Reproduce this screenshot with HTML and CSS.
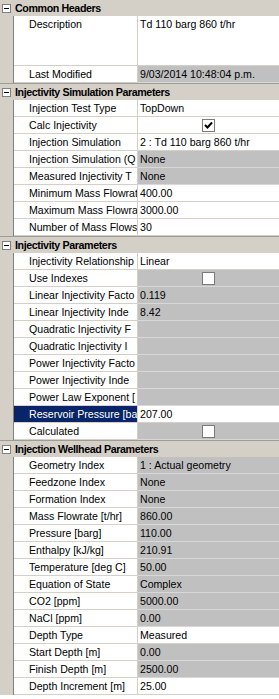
FILE: index.html
```html
<!DOCTYPE html>
<html lang="en">
<head>
    <meta charset="UTF-8">
    <meta name="viewport" content="width=device-width, initial-scale=1.0">
    <title>Property Grid</title>
    <link rel="stylesheet" href="styles.css">
</head>
<body>
    <div class="grid">
        <div class="section">
            <div class="header first"><span class="toggle"></span>Common Headers</div>
            <div class="row tall">
                <div class="gutter"></div>
                <div class="name">Description</div>
                <div class="value">Td 110 barg 860 t/hr</div>
            </div>
            <div class="row">
                <div class="gutter"></div>
                <div class="name">Last Modified</div>
                <div class="value ro">9/03/2014 10:48:04 p.m.</div>
            </div>
        </div>

        <div class="section">
            <div class="header"><span class="toggle"></span>Injectivity Simulation Parameters</div>
            <div class="row"><div class="gutter"></div><div class="name">Injection Test Type</div><div class="value">TopDown</div></div>
            <div class="row">
                <div class="gutter"></div>
                <div class="name">Calc Injectivity</div>
                <div class="value check">
                    <span class="box"><svg width="9" height="9" viewBox="0 0 9 9"><path d="M1 4 L3.5 6.5 L8 1.5" fill="none" stroke="#000" stroke-width="2"/></svg></span>
                </div>
            </div>
            <div class="row"><div class="gutter"></div><div class="name">Injection Simulation</div><div class="value">2 : Td 110 barg 860 t/hr</div></div>
            <div class="row"><div class="gutter"></div><div class="name">Injection Simulation (Q</div><div class="value ro">None</div></div>
            <div class="row"><div class="gutter"></div><div class="name">Measured Injectivity T</div><div class="value ro">None</div></div>
            <div class="row"><div class="gutter"></div><div class="name">Minimum Mass Flowrat</div><div class="value">400.00</div></div>
            <div class="row"><div class="gutter"></div><div class="name">Maximum Mass Flowra</div><div class="value">3000.00</div></div>
            <div class="row"><div class="gutter"></div><div class="name">Number of Mass Flows</div><div class="value">30</div></div>
        </div>

        <div class="section">
            <div class="header"><span class="toggle"></span>Injectivity Parameters</div>
            <div class="row"><div class="gutter"></div><div class="name">Injectivity Relationship</div><div class="value">Linear</div></div>
            <div class="row"><div class="gutter"></div><div class="name">Use Indexes</div><div class="value ro check"><span class="box"></span></div></div>
            <div class="row"><div class="gutter"></div><div class="name">Linear Injectivity Facto</div><div class="value ro">0.119</div></div>
            <div class="row"><div class="gutter"></div><div class="name">Linear Injectivity Inde</div><div class="value ro">8.42</div></div>
            <div class="row"><div class="gutter"></div><div class="name">Quadratic Injectivity F</div><div class="value ro"></div></div>
            <div class="row"><div class="gutter"></div><div class="name">Quadratic Injectivity I</div><div class="value ro"></div></div>
            <div class="row"><div class="gutter"></div><div class="name">Power Injectivity Facto</div><div class="value ro"></div></div>
            <div class="row"><div class="gutter"></div><div class="name">Power Injectivity Inde</div><div class="value ro"></div></div>
            <div class="row"><div class="gutter"></div><div class="name">Power Law Exponent [</div><div class="value ro"></div></div>
            <div class="row"><div class="gutter"></div><div class="name selected">Reservoir Pressure [ba</div><div class="value">207.00</div></div>
            <div class="row"><div class="gutter"></div><div class="name">Calculated</div><div class="value ro check"><span class="box"></span></div></div>
        </div>

        <div class="section">
            <div class="header"><span class="toggle"></span>Injection Wellhead Parameters</div>
            <div class="row"><div class="gutter"></div><div class="name">Geometry Index</div><div class="value ro">1 : Actual geometry</div></div>
            <div class="row"><div class="gutter"></div><div class="name">Feedzone Index</div><div class="value ro">None</div></div>
            <div class="row"><div class="gutter"></div><div class="name">Formation Index</div><div class="value ro">None</div></div>
            <div class="row"><div class="gutter"></div><div class="name">Mass Flowrate [t/hr]</div><div class="value ro">860.00</div></div>
            <div class="row"><div class="gutter"></div><div class="name">Pressure [barg]</div><div class="value ro">110.00</div></div>
            <div class="row"><div class="gutter"></div><div class="name">Enthalpy [kJ/kg]</div><div class="value ro">210.91</div></div>
            <div class="row"><div class="gutter"></div><div class="name">Temperature [deg C]</div><div class="value ro">50.00</div></div>
            <div class="row"><div class="gutter"></div><div class="name">Equation of State</div><div class="value ro">Complex</div></div>
            <div class="row"><div class="gutter"></div><div class="name">CO2 [ppm]</div><div class="value ro">5000.00</div></div>
            <div class="row"><div class="gutter"></div><div class="name">NaCl [ppm]</div><div class="value ro">0.00</div></div>
            <div class="row"><div class="gutter"></div><div class="name">Depth Type</div><div class="value">Measured</div></div>
            <div class="row"><div class="gutter"></div><div class="name">Start Depth [m]</div><div class="value ro">0.00</div></div>
            <div class="row"><div class="gutter"></div><div class="name">Finish Depth [m]</div><div class="value ro">2500.00</div></div>
            <div class="row"><div class="gutter"></div><div class="name">Depth Increment [m]</div><div class="value">25.00</div></div>
        </div>
    </div>
</body>
</html>
```

FILE: styles.css
```css
body {
    margin: 0;
    background-color: #ffffff;
    font-family: "Liberation Sans", Arial, sans-serif;
    font-size: 10.6px;
    color: #000000;
}

.grid {
    width: 279px;
}

.header {
    display: flex;
    align-items: center;
    height: 16px;
    background-color: #d4d0c8;
    border-top: 1px solid #a09c94;
    font-weight: bold;
    font-size: 10.7px;
    letter-spacing: -0.4px;
    white-space: nowrap;
    overflow: hidden;
}

.header.first {
    border-top: none;
}

.toggle {
    position: relative;
    box-sizing: border-box;
    width: 9px;
    height: 9px;
    margin: 0 4px 0 2px;
    border: 1px solid #808080;
    background-color: #ffffff;
}

.toggle::after {
    content: "";
    position: absolute;
    left: 1px;
    top: 3px;
    width: 5px;
    height: 1px;
    background-color: #000000;
}

.row {
    display: grid;
    grid-template-columns: 14px 124px 1fr;
    height: 17px;
}

.row.tall {
    height: 50px;
}

.gutter {
    background-color: #d4d0c8;
    border-right: 1px solid #808080;
}

.name, .value {
    border-bottom: 1px solid #d4d0c8;
    white-space: nowrap;
    overflow: hidden;
    line-height: 16px;
}

.name {
    padding-left: 15px;
    border-right: 1px solid #d4d0c8;
    background-color: #ffffff;
}

.name.selected {
    background-color: #0a246a;
    color: #ffffff;
}

.value {
    padding-left: 2px;
    background-color: #ffffff;
}

.value.ro {
    background-color: #c0c0c0;
    border-bottom-color: #d8d8d8;
}

.check {
    display: flex;
    justify-content: center;
    align-items: center;
    padding-left: 0;
}

.box {
    box-sizing: border-box;
    display: flex;
    justify-content: center;
    align-items: center;
    width: 13px;
    height: 13px;
    border: 1px solid #7a7a7a;
    background-color: #ffffff;
}
```
